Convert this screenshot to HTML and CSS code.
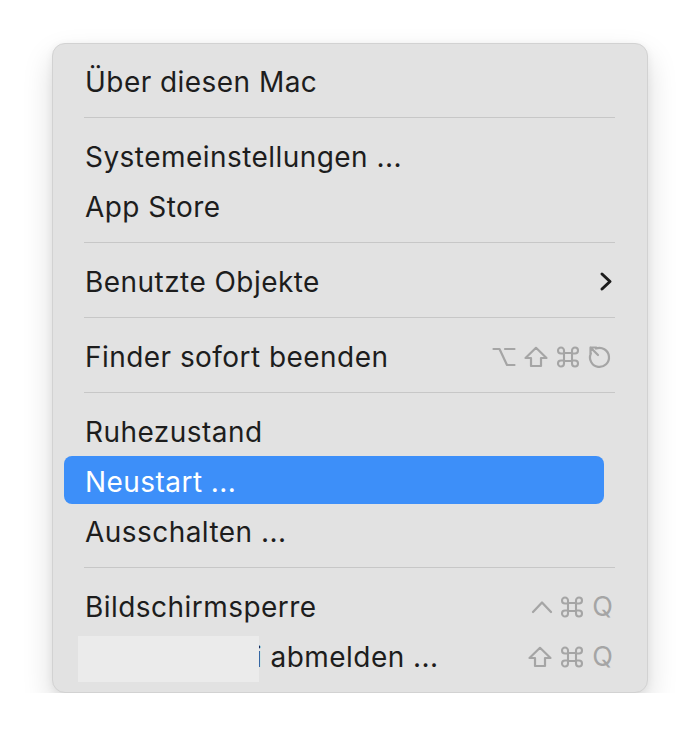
FILE: index.html
```html
<!DOCTYPE html>
<html lang="de">
<head>
<meta charset="utf-8">
<title>Apple-Menü</title>
<link rel="stylesheet" href="styles.css">
</head>
<body>
<div class="page">
  <div class="menu">
    <div class="item"><span class="label">Über diesen Mac</span></div>
    <div class="sep"></div>
    <div class="item"><span class="label">Systemeinstellungen ...</span></div>
    <div class="item"><span class="label">App Store</span></div>
    <div class="sep"></div>
    <div class="item">
      <span class="label">Benutzte Objekte</span>
      <svg class="chevron" width="14" height="21" viewBox="0 0 14 21"><path d="M3 3 L11 10.5 L3 18" fill="none" stroke="#1c1c1c" stroke-width="3" stroke-linecap="round" stroke-linejoin="round"/></svg>
    </div>
    <div class="sep"></div>
    <div class="item">
      <span class="label">Finder sofort beenden</span>
      <span class="keys">
        <svg class="key" width="24" height="22" viewBox="0 0 24 22"><path d="M1.5 3 H7.5 L15 19 H22.5 M13 3 H22.5" fill="none" stroke="#a5a5a5" stroke-width="2.2" stroke-linecap="round" stroke-linejoin="round"/></svg>
        <svg class="key" width="26" height="22" viewBox="0 0 26 22"><path d="M13 1.8 L23.5 12 H18 V20 H8 V12 H2.5 Z" fill="none" stroke="#a5a5a5" stroke-width="2.2" stroke-linejoin="round"/></svg>
        <svg class="key" width="24" height="22" viewBox="0 0 24 22"><path d="M8 7 H16 V15 H8 Z M8 7 V4.5 A3 3 0 1 0 5 7.5 H8 M16 7 V4.5 A3 3 0 1 1 19 7.5 H16 M8 15 V17.5 A3 3 0 1 1 5 14.5 H8 M16 15 V17.5 A3 3 0 1 0 19 14.5 H16" fill="none" stroke="#a5a5a5" stroke-width="2.1" stroke-linejoin="round"/></svg>
        <svg class="key" width="26" height="24" viewBox="0 0 26 24"><path d="M9 3.6 A9.5 9.5 0 1 1 3.8 8.6" fill="none" stroke="#a5a5a5" stroke-width="2.2" stroke-linecap="round"/><path d="M3.5 2.5 L11 10 M3.5 2.5 V8.2 M3.5 2.5 H9.2" fill="none" stroke="#a5a5a5" stroke-width="2.2" stroke-linecap="round" stroke-linejoin="round"/></svg>
      </span>
    </div>
    <div class="sep"></div>
    <div class="item"><span class="label">Ruhezustand</span></div>
    <div class="item active"><span class="label">Neustart ...</span></div>
    <div class="item"><span class="label">Ausschalten ...</span></div>
    <div class="sep"></div>
    <div class="item">
      <span class="label">Bildschirmsperre</span>
      <span class="keys">
        <svg class="key" width="22" height="14" viewBox="0 0 22 14"><path d="M2 12 L11 2.5 L20 12" fill="none" stroke="#a5a5a5" stroke-width="2.3" stroke-linecap="round" stroke-linejoin="round"/></svg>
        <svg class="key" width="24" height="22" viewBox="0 0 24 22"><path d="M8 7 H16 V15 H8 Z M8 7 V4.5 A3 3 0 1 0 5 7.5 H8 M16 7 V4.5 A3 3 0 1 1 19 7.5 H16 M8 15 V17.5 A3 3 0 1 1 5 14.5 H8 M16 15 V17.5 A3 3 0 1 0 19 14.5 H16" fill="none" stroke="#a5a5a5" stroke-width="2.1" stroke-linejoin="round"/></svg>
        <span class="qkey">Q</span>
      </span>
    </div>
    <div class="item">
      <span class="label"><span class="spacer"></span>i abmelden ...</span>
      <span class="redact"></span>
      <span class="keys">
        <svg class="key" width="26" height="22" viewBox="0 0 26 22"><path d="M13 1.8 L23.5 12 H18 V20 H8 V12 H2.5 Z" fill="none" stroke="#a5a5a5" stroke-width="2.2" stroke-linejoin="round"/></svg>
        <svg class="key" width="24" height="22" viewBox="0 0 24 22"><path d="M8 7 H16 V15 H8 Z M8 7 V4.5 A3 3 0 1 0 5 7.5 H8 M16 7 V4.5 A3 3 0 1 1 19 7.5 H16 M8 15 V17.5 A3 3 0 1 1 5 14.5 H8 M16 15 V17.5 A3 3 0 1 0 19 14.5 H16" fill="none" stroke="#a5a5a5" stroke-width="2.1" stroke-linejoin="round"/></svg>
        <span class="qkey">Q</span>
      </span>
    </div>
  </div>
</div>
</body>
</html>
```

FILE: styles.css
```css
html, body {
  margin: 0;
  padding: 0;
  background: #ffffff;
}

.page {
  padding: 43px 0 0 52px;
}

.menu {
  display: flex;
  flex-direction: column;
  width: 596px;
  height: 650px;
  box-sizing: border-box;
  padding: 11px 0 12px 0;
  background: #e2e2e2;
  border: 1px solid #d2d2d2;
  border-radius: 13px;
  box-shadow: 0 14px 30px rgba(0, 0, 0, 0.15), 0 2px 8px rgba(0, 0, 0, 0.06);
  font-family: Inter, "Noto Sans", sans-serif;
  color: #1d1d1d;
}

.item {
  position: relative;
  display: flex;
  align-items: center;
  justify-content: space-between;
  flex: none;
  height: 48px;
  margin: 1px 34px 1px 11px;
  padding: 3px 0 0 21px;
  box-sizing: border-box;
  border-radius: 8px;
  font-size: 28px;
  letter-spacing: 0.45px;
}

.item.active {
  margin-right: 43px;
  background: #3d8ff9;
  color: #ffffff;
}

.label {
  white-space: nowrap;
}

.sep {
  flex: none;
  height: 1px;
  margin: 12px 32px 12px 31px;
  background: #c7c7c7;
}

.chevron {
  display: block;
}

.keys {
  display: flex;
  align-items: center;
  gap: 7px;
}

.key {
  display: block;
}

.qkey {
  font-size: 27px;
  letter-spacing: 0;
  color: #a5a5a5;
  line-height: 1;
  width: 22px;
  text-align: right;
}

.spacer {
  display: inline-block;
  width: 170px;
}

.redact {
  position: absolute;
  left: 14px;
  top: 5px;
  width: 181px;
  height: 46px;
  background: #ebebeb;
}
```
